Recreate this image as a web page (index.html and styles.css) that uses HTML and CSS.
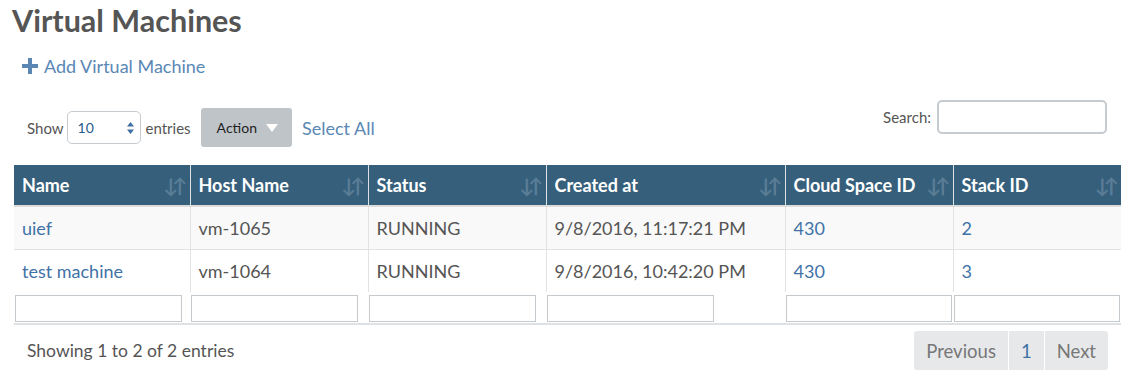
FILE: index.html
```html
<!DOCTYPE html>
<html lang="en">
<head>
    <meta charset="UTF-8">
    <title>Virtual Machines</title>
    <link rel="stylesheet" href="styles.css">
</head>
<body>
    <h1 class="title">Virtual Machines</h1>
    <a class="add-link" href="#">
        <svg class="plus" width="16" height="16" viewBox="0 0 16 16"><path d="M6 0h4v6h6v4h-6v6h-4v-6h-6v-4h6z" fill="#5b87b5"/></svg>
        Add Virtual Machine
    </a>

    <div class="controls">
        <div class="left-controls">
            <span class="label">Show</span>
            <div class="select-box">
                <span>10</span>
                <svg width="7" height="12" viewBox="0 0 7 12"><path d="M3.5 0L7 4.5H0z M3.5 12L7 7.5H0z" fill="#3d6fa3"/></svg>
            </div>
            <span class="label">entries</span>
            <button class="action-btn">Action <svg width="12" height="8" viewBox="0 0 12 8"><path d="M0 0h12L6 8z" fill="#fff"/></svg></button>
            <a class="select-all" href="#">Select All</a>
        </div>
        <div class="search">
            <span class="label">Search:</span>
            <input type="text" class="search-input">
        </div>
    </div>

    <div class="table-wrap">
        <table class="vm-table">
            <colgroup>
                <col style="width:176px">
                <col style="width:178px">
                <col style="width:178px">
                <col style="width:239px">
                <col style="width:168px">
                <col>
            </colgroup>
            <thead>
                <tr>
                    <th>Name</th>
                    <th>Host Name</th>
                    <th>Status</th>
                    <th>Created at</th>
                    <th>Cloud Space ID</th>
                    <th>Stack ID</th>
                </tr>
            </thead>
            <tbody>
                <tr class="odd">
                    <td><a href="#">uief</a></td>
                    <td>vm-1065</td>
                    <td>RUNNING</td>
                    <td>9/8/2016, 11:17:21 PM</td>
                    <td><a href="#">430</a></td>
                    <td><a href="#">2</a></td>
                </tr>
                <tr>
                    <td><a href="#">test machine</a></td>
                    <td>vm-1064</td>
                    <td>RUNNING</td>
                    <td>9/8/2016, 10:42:20 PM</td>
                    <td><a href="#">430</a></td>
                    <td><a href="#">3</a></td>
                </tr>
            </tbody>
            <tfoot>
                <tr>
                    <td><input type="text" class="filter"></td>
                    <td><input type="text" class="filter"></td>
                    <td><input type="text" class="filter"></td>
                    <td><input type="text" class="filter"></td>
                    <td><input type="text" class="filter"></td>
                    <td><input type="text" class="filter"></td>
                </tr>
            </tfoot>
        </table>
    </div>

    <div class="footer">
        <span class="info">Showing 1 to 2 of 2 entries</span>
        <div class="pager">
            <span class="page-btn">Previous</span>
            <span class="page-btn current">1</span>
            <span class="page-btn">Next</span>
        </div>
    </div>
</body>
</html>
```
FILE: styles.css
```css
body {
    margin: 0;
    font-family: Lato, "Open Sans", sans-serif;
    color: #555;
    background: #fff;
}

.title {
    margin: 0;
    padding: 2px 0 0 12px;
    font-size: 30.5px;
    line-height: 36px;
    font-weight: 700;
    color: #555;
}

.add-link {
    display: inline-flex;
    align-items: center;
    gap: 6px;
    margin: 17px 0 0 22px;
    font-size: 18px;
    color: #5b87b5;
    text-decoration: none;
}

.controls {
    display: flex;
    justify-content: space-between;
    align-items: flex-start;
    padding: 23px 25px 0 27px;
}

.left-controls {
    display: flex;
    align-items: center;
    margin-top: 8px;
}

.label {
    font-size: 15px;
    color: #555;
}

.select-box {
    display: flex;
    justify-content: space-between;
    align-items: center;
    box-sizing: border-box;
    width: 74px;
    height: 33px;
    margin: 0 5px 0 3px;
    padding: 0 6px 0 10px;
    border: 1px solid #c6cbd0;
    border-radius: 5px;
    font-size: 14px;
    color: #2a5b8e;
}

.action-btn {
    display: flex;
    align-items: center;
    gap: 9px;
    height: 39px;
    margin-left: 10px;
    padding: 0 14px 0 16px;
    border: none;
    border-radius: 3px;
    background: #bfc4c9;
    font-family: Lato, sans-serif;
    font-size: 14px;
    color: #222;
}

.select-all {
    margin-left: 10px;
    font-size: 18px;
    color: #5b87b5;
    text-decoration: none;
}

.search {
    display: flex;
    align-items: center;
    gap: 6px;
}

.search-input {
    box-sizing: border-box;
    width: 170px;
    height: 34px;
    border: 2px solid #c6cbd0;
    border-radius: 5px;
}

.table-wrap {
    margin: 18px 11px 0 14px;
    border-bottom: 2px solid #dfe2e5;
}

.vm-table {
    width: 100%;
    border-collapse: collapse;
    table-layout: fixed;
    font-size: 18px;
}

.vm-table th {
    position: relative;
    height: 40px;
    padding: 0 8px;
    text-align: left;
    font-weight: 700;
    color: #fff;
    background: #365f7c;
    border-left: 1px solid #dfe2e5;
    border-bottom: 2px solid #dcdcdc;
}

.vm-table th:first-child {
    border-left: none;
}

.vm-table th::after {
    content: "\2193\2191";
    position: absolute;
    right: 8px;
    top: 8px;
    font-size: 20px;
    letter-spacing: -6px;
    color: #5a7d96;
    font-weight: 700;
}

.vm-table td {
    height: 42px;
    padding: 0 8px;
    color: #555;
    border-left: 1px solid #e2e2e2;
    border-top: 1px solid #e2e2e2;
}

.vm-table td:first-child {
    border-left: none;
}

.vm-table tr.odd td {
    background: #f9f9f9;
}

.vm-table td a {
    color: #3f72a6;
    text-decoration: none;
}

.vm-table tfoot td {
    height: 27px;
    padding: 3px 1px 1px;
    vertical-align: top;
    border: none;
}

.filter {
    display: block;
    box-sizing: border-box;
    width: 167px;
    max-width: 100%;
    height: 27px;
    border: 1px solid #c5cace;
}

.footer {
    display: flex;
    justify-content: space-between;
    align-items: center;
    padding: 6px 24px 0 27px;
}

.info {
    font-size: 17.5px;
    color: #555;
}

.pager {
    display: flex;
    border-radius: 3px;
    overflow: hidden;
    background: #e6e8ea;
}

.page-btn {
    display: flex;
    align-items: center;
    height: 39px;
    padding: 0 12px;
    font-size: 18.5px;
    color: #777;
    border-left: 1px solid #fff;
}

.page-btn:first-child {
    border-left: none;
}

.page-btn.current {
    color: #3f72a6;
}
```
